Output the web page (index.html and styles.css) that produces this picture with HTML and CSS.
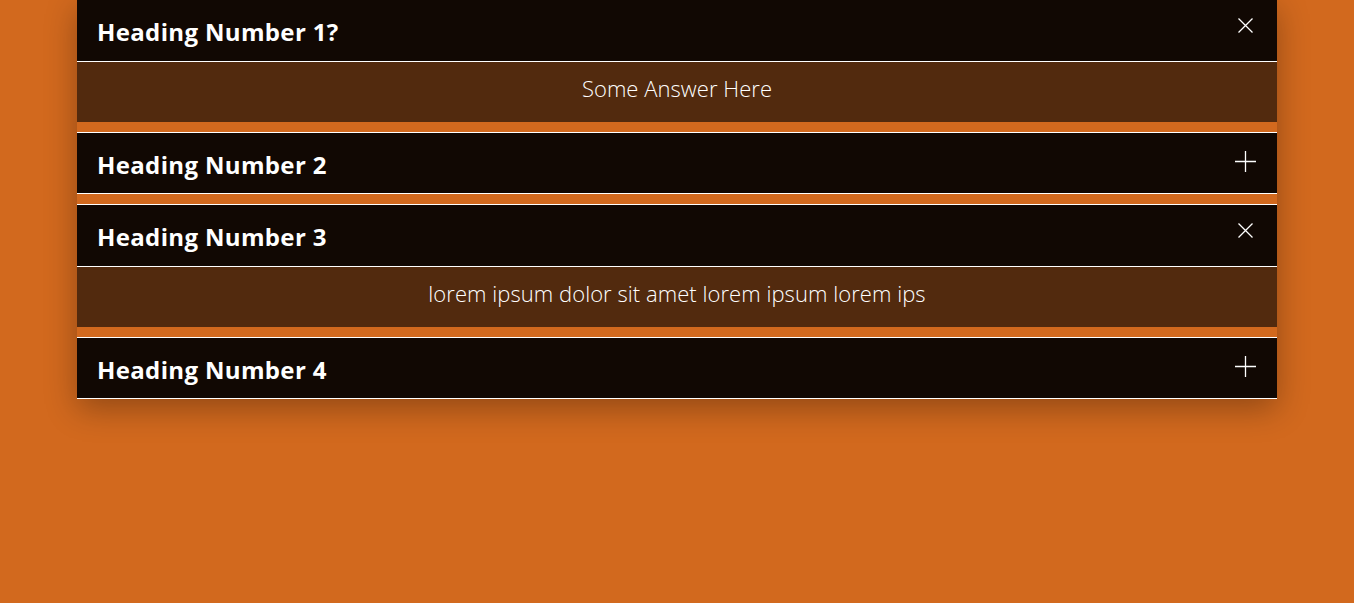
FILE: index.html
```html
<!DOCTYPE html>
<html lang="en">
<head>
<meta charset="utf-8">
<title>FAQ</title>
<link rel="stylesheet" href="styles.css">
</head>
<body>
<div class="faq">
  <div class="item open">
    <div class="head">
      <span class="title">Heading Number 1?</span>
      <svg class="icon close" width="15" height="15" viewBox="0 0 15 15"><path d="M0.5 0.5 L14.5 14.5 M14.5 0.5 L0.5 14.5" stroke="#fff" stroke-width="1.3" fill="none"/></svg>
    </div>
    <div class="answer">Some Answer Here</div>
  </div>
  <div class="item">
    <div class="head">
      <span class="title">Heading Number 2</span>
      <svg class="icon plus" width="21" height="21" viewBox="0 0 21 21"><path d="M10.5 0 V21 M0 10.5 H21" stroke="#fff" stroke-width="1.3" fill="none"/></svg>
    </div>
  </div>
  <div class="item open">
    <div class="head">
      <span class="title">Heading Number 3</span>
      <svg class="icon close" width="15" height="15" viewBox="0 0 15 15"><path d="M0.5 0.5 L14.5 14.5 M14.5 0.5 L0.5 14.5" stroke="#fff" stroke-width="1.3" fill="none"/></svg>
    </div>
    <div class="answer">lorem ipsum dolor sit amet lorem ipsum lorem ips</div>
  </div>
  <div class="item">
    <div class="head">
      <span class="title">Heading Number 4</span>
      <svg class="icon plus" width="21" height="21" viewBox="0 0 21 21"><path d="M10.5 0 V21 M0 10.5 H21" stroke="#fff" stroke-width="1.3" fill="none"/></svg>
    </div>
  </div>
</div>
</body>
</html>
```
FILE: styles.css
```css
html, body {
  margin: 0;
  padding: 0;
  background: #d2691e;
  height: 100%;
  overflow: hidden;
}
body {
  font-family: "Open Sans", "Noto Sans", sans-serif;
  color: #fff;
}
.faq {
  width: 1200px;
  margin: -1px auto 0;
  box-shadow: 0 10px 30px rgba(0, 0, 0, 0.3);
}
.item {
  margin-bottom: 10px;
}
.item:last-child {
  margin-bottom: 0;
}
.head {
  height: 60.5px;
  background: #110803;
  border-top: 1px solid #fff;
  border-bottom: 1px solid #fff;
  display: flex;
  justify-content: space-between;
  align-items: flex-start;
  padding: 0 21px 0 20px;
}
.title {
  font-size: 24px;
  font-weight: 700;
  line-height: 1;
  margin-top: 20px;
  letter-spacing: 0.35px;
}
.icon {
  display: block;
}
.icon.close {
  margin-top: 18px;
  margin-right: 3px;
}
.icon.plus {
  margin-top: 18px;
}
.answer {
  height: 60px;
  background: #522a0e;
  display: flex;
  align-items: center;
  justify-content: center;
  font-size: 22px;
  font-weight: 300;
  letter-spacing: 0.05px;
  padding-bottom: 7px;
  box-sizing: border-box;
}
```
